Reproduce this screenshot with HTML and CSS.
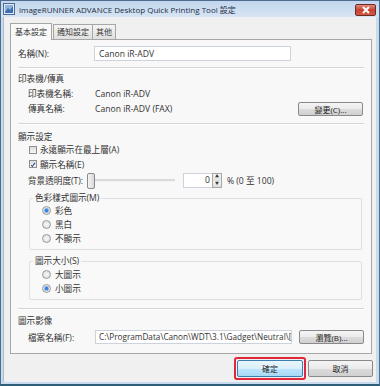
FILE: index.html
```html
<!DOCTYPE html>
<html lang="zh-TW">
<head>
    <meta charset="UTF-8">
    <title>imageRUNNER ADVANCE Desktop Quick Printing Tool 設定</title>
    <link rel="stylesheet" href="styles.css">
</head>
<body>
    <div class="window">
        <div class="titlebar">
            <svg class="app-icon" width="12" height="12" viewBox="0 0 12 12">
                <rect x="0.5" y="0.5" width="11" height="11" fill="#dfe9f5" stroke="#4a6c96"/>
                <rect x="2" y="2" width="8" height="8" fill="#8fb3dc"/>
                <path d="M2 9 L5 5 L7 7 L10 3 L10 10 L2 10 Z" fill="#3d6fae"/>
            </svg>
            <span class="title">imageRUNNER ADVANCE Desktop Quick Printing Tool 設定</span>
            <div class="close-btn">
                <svg width="10" height="8" viewBox="0 0 10 8">
                    <path d="M2 1 L8 7 M8 1 L2 7" stroke="#fff" stroke-width="2"/>
                </svg>
            </div>
        </div>

        <div class="client">
            <div class="tabs">
                <div class="tab active">基本設定</div>
                <div class="tab">通知設定</div>
                <div class="tab">其他</div>
            </div>

            <div class="panel">
                <div class="row name-row">
                    <span class="label">名稱(N):</span>
                    <div class="textbox name-box">Canon iR-ADV</div>
                </div>

                <div class="sep sep-1"></div>

                <div class="printer-sec">
                    <div class="printer-info">
                        <div class="line">印表機/傳真</div>
                        <div class="line sub"><span class="sub-label">印表機名稱:</span>Canon iR-ADV</div>
                        <div class="line sub"><span class="sub-label">傳真名稱:</span>Canon iR-ADV (FAX)</div>
                    </div>
                    <div class="btn change-btn">變更(C)...</div>
                </div>

                <div class="sep sep-2"></div>

                <div class="line disp-title">顯示設定</div>
                <div class="check cb-1"><span class="box"></span>永遠顯示在最上層(A)</div>
                <div class="check cb-2">
                    <span class="box">
                        <svg width="8" height="8" viewBox="0 0 8 8"><path d="M1.5 4 L3.2 6 L6.5 1.2" fill="none" stroke="#2b4a8a" stroke-width="1.4"/></svg>
                    </span>顯示名稱(E)
                </div>

                <div class="slider-row">
                    <span class="sub-label">背景透明度(T):</span>
                    <div class="slider">
                        <div class="thumb"></div>
                        <div class="track"></div>
                    </div>
                    <div class="spin">
                        <div class="spin-box">0</div>
                        <div class="spin-btns">
                            <div class="arrow">▲</div>
                            <div class="arrow">▼</div>
                        </div>
                    </div>
                    <span class="range">% (0 至 100)</span>
                </div>

                <div class="group group-color">
                    <span class="legend">色彩樣式圖示(M)</span>
                    <div class="radio"><span class="dot on"></span>彩色</div>
                    <div class="radio"><span class="dot"></span>黑白</div>
                    <div class="radio"><span class="dot"></span>不顯示</div>
                </div>

                <div class="group group-size">
                    <span class="legend">圖示大小(S)</span>
                    <div class="radio"><span class="dot"></span>大圖示</div>
                    <div class="radio"><span class="dot on"></span>小圖示</div>
                </div>

                <div class="sep sep-3"></div>

                <div class="line img-title">圖示影像</div>
                <div class="row file-row">
                    <span class="sub-label">檔案名稱(F):</span>
                    <div class="textbox file-box">C:\ProgramData\Canon\WDT\3.1\Gadget\Neutral\[</div>
                    <div class="btn browse-btn">瀏覽(B)...</div>
                </div>
            </div>

            <div class="footer">
                <div class="focus-ring">
                    <div class="btn ok-btn">確定</div>
                </div>
                <div class="btn cancel-btn">取消</div>
            </div>
        </div>
    </div>
</body>
</html>
```

FILE: styles.css
```css
html, body { margin: 0; padding: 0; }
body { width: 380px; height: 386px; overflow: hidden; background: #fff; font-family: 'Open Sans', 'Noto Sans CJK TC', sans-serif; font-size: 8.6px; color: #333; }

.window {
    width: 380px;
    height: 386px;
    box-sizing: border-box;
    border: 1px solid #4e6c8e;
    border-bottom: 2px solid #2f5f78;
    background: #c8daee;
    padding: 0 3px 2px 2px;
    display: flex;
    flex-direction: column;
}

/* 标题栏 */
.titlebar {
    height: 16px;
    display: flex;
    align-items: center;
    background: linear-gradient(#c2d6ee, #d7e5f4);
    margin: 0 -3px 0 -2px;
    padding: 0 3px 0 2px;
}
.app-icon { margin-right: 4px; }
.title { flex: 1; font-size: 8px; color: #1c2c40; white-space: nowrap; }
.close-btn {
    width: 19px;
    height: 10px;
    border: 1px solid #6b2a22;
    border-radius: 2px;
    background: linear-gradient(#e48a7c, #c8402f 50%, #d45a45);
    display: flex;
    align-items: center;
    justify-content: center;
    margin-top: 2px;
}

/* 客户区 */
.client {
    flex: 1;
    background: #f0f0f0;
    padding: 6px 3px 0 6px;
    border-left: 1px solid #a9bcd2;
}

.tabs { display: flex; height: 16px; align-items: flex-end; padding-left: 0; font-size: 8px; }
.tab {
    height: 14px;
    line-height: 14px;
    padding: 0 3px;
    border: 1px solid #a6a6a6;
    border-bottom: none;
    background: linear-gradient(#f4f4f4, #e0e0e0);
    margin-right: -1px;
}
.tab.active {
    height: 16px;
    line-height: 16px;
    background: #f9f9f9;
    position: relative;
    z-index: 1;
    margin-bottom: -1px;
    padding: 0 4px;
    margin-right: 1px;
}

.panel {
    width: 362px;
    height: 315px;
    box-sizing: border-box;
    border: 1px solid #a6a6a6;
    background: #f8f8f8;
    padding: 0 7px 0 7px;
}

.row { display: flex; align-items: center; }
.label { width: 76px; }
.sub-label { display: inline-block; width: 67px; }
.line { height: 15px; line-height: 15px; }
.sub { padding-left: 10px; }

.textbox {
    height: 15px;
    line-height: 15px;
    box-sizing: border-box;
    border: 1px solid #ccd3dc;
    background: #fff;
    padding: 0 4px;
    white-space: nowrap;
    overflow: hidden;
}
.name-row { margin-top: 6px; }
.name-box { width: 197px; }

.sep { height: 1px; background: #d5d5d5; border-bottom: 1px solid #fff; width: 346px; }
.sep-1 { margin-top: 6px; }
.sep-2 { margin-top: 6px; }
.sep-3 { margin-top: 8px; }

.printer-sec { display: flex; justify-content: space-between; align-items: flex-end; margin-top: 3px; padding-right: 1px; }

.btn {
    height: 14px;
    line-height: 14px;
    box-sizing: border-box;
    border: 1px solid #8a8a8a;
    border-radius: 2px;
    background: linear-gradient(#f4f4f4, #ebebeb 50%, #dcdcdc 51%, #d0d0d0);
    text-align: center;
    font-size: 8px;
    color: #222;
}
.change-btn { width: 65px; margin-bottom: 1px; }

.disp-title { margin-top: 6px; height: 12px; line-height: 12px; }

.check { display: flex; align-items: center; padding-left: 11px; height: 14px; }
.cb-1 { margin-top: 0; height: 13px; }
.cb-2 { margin-top: 1px; }
.box {
    width: 8px;
    height: 8px;
    box-sizing: border-box;
    border: 1px solid #8f8f8f;
    background: linear-gradient(#dcdcdc, #f6f6f6);
    margin-right: 3px;
    display: flex;
}

.slider-row { display: flex; align-items: center; height: 15px; margin-top: 2px; padding-left: 10px; }
.slider-row .sub-label { width: 59px; }
.slider { position: relative; width: 96px; height: 15px; display: flex; align-items: center; }
.thumb {
    width: 6px;
    height: 14px;
    border: 1px solid #8a8a8a;
    border-radius: 2px;
    background: linear-gradient(90deg, #f4f4f4, #dadada);
}
.track { flex: 1; height: 2px; background: #dadada; border-bottom: 1px solid #f4f4f4; margin-right: 8px; }
.spin { display: flex; height: 15px; }
.spin-box {
    width: 29px;
    height: 15px;
    box-sizing: border-box;
    border: 1px solid #ccd3dc;
    border-right: none;
    background: #fff;
    text-align: right;
    padding-right: 2px;
    line-height: 13px;
}
.spin-btns { width: 10px; display: flex; flex-direction: column; border: 1px solid #a8a8a8; box-sizing: border-box; }
.arrow { flex: 1; font-size: 4px; line-height: 6px; text-align: center; background: linear-gradient(#f5f5f5, #dedede); color: #333; }
.range { margin-left: 5px; }

.group {
    position: relative;
    width: 333px;
    margin-left: 11px;
    box-sizing: border-box;
    border: 1px solid #dcdfe4;
    border-radius: 2px;
    background: #f9f9f9;
    padding: 4px 0 3px 12px;
}
.group-color { margin-top: 10px; height: 52px; }
.group-size { margin-top: 11px; height: 39px; padding-top: 5px; }
.legend { position: absolute; left: 3px; top: -7px; background: #f8f8f8; padding: 0 2px; line-height: 13px; }
.radio { display: flex; align-items: center; height: 14px; }
.dot {
    width: 7px;
    height: 7px;
    border-radius: 50%;
    border: 1px solid #9a9a9a;
    background: radial-gradient(#f8f8f8, #d8d8d8);
    margin-right: 4px;
    position: relative;
}
.dot.on { background: radial-gradient(#3f86d8 30%, #9cc4ee 45%, #e6e6e6 60%); }

.img-title { margin-top: 4px; height: 14px; line-height: 14px; }
.file-row { margin-top: 2px; padding-left: 10px; }
.file-box { width: 197px; color: #333; height: 14px; line-height: 12px; font-size: 8.2px; padding: 0 0 0 3px; }
.browse-btn { width: 65px; margin-left: 7px; }

.footer { display: flex; justify-content: flex-end; align-items: center; margin-top: 3px; padding-right: 0; }
.focus-ring {
    border: 2px solid #e0283a;
    border-radius: 3px;
    padding: 1px;
    margin-right: 2px;
}
.ok-btn {
    width: 66px;
    height: 17px;
    line-height: 15px;
    border-color: #3c7fb1;
    background: linear-gradient(#eaf6fd, #d9f0fc 50%, #bee6fd 51%, #a7d9f5);
}
.cancel-btn { width: 65px; height: 17px; line-height: 15px; }
```
